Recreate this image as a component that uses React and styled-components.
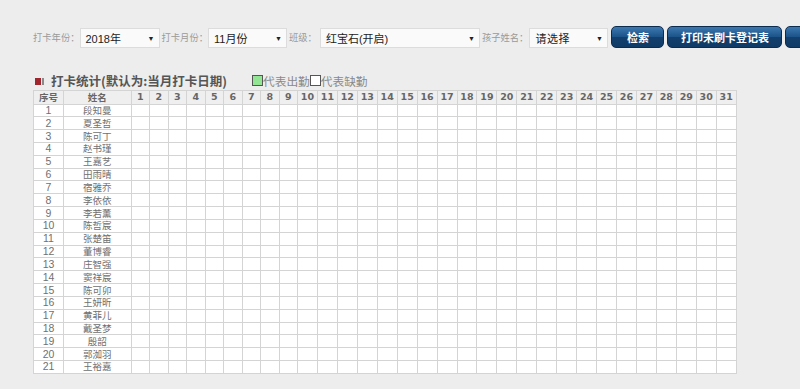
import React from 'react'
import styled, { createGlobalStyle } from 'styled-components'

const GlobalStyle = createGlobalStyle`
  body {
    margin: 0;
    background: #ededed;
    font-family: "Liberation Sans", "Noto Sans CJK SC", sans-serif;
    overflow: hidden;
  }
`

const students = [
  '段知曼', '夏圣哲', '陈可丁', '赵书瑾', '王嘉艺', '田雨晴', '宿雅乔',
  '李依依', '李若薰', '陈哲宸', '张楚笛', '董博睿', '庄智强', '窦祥宸',
  '陈可卯', '王妍昕', '黄菲儿', '戴圣梦', '殷韶', '郭洳羽', '王裕嘉',
]

const days = Array.from({ length: 31 }, (_, i) => i + 1)

export default function App() {
  return (
    <Page>
      <GlobalStyle />
      <Toolbar>
        <FieldLabel first>打卡年份：</FieldLabel>
        <SelectBox width={80}>2018年<Caret>▼</Caret></SelectBox>
        <FieldLabel>打卡月份：</FieldLabel>
        <SelectBox width={79}>11月份<Caret>▼</Caret></SelectBox>
        <FieldLabel extra={3}>班级：</FieldLabel>
        <SelectBox width={160}>红宝石(开启)<Caret>▼</Caret></SelectBox>
        <FieldLabel extra={1}>孩子姓名：</FieldLabel>
        <SelectBox width={79} spaced>请选择<Caret>▼</Caret></SelectBox>
        <Button width={53}>检索</Button>
        <Button width={115}>打印未刷卡登记表</Button>
        <Button width={80}>导出</Button>
      </Toolbar>

      <TitleRow>
        <TitleIcon />
        <Title>打卡统计(默认为:当月打卡日期)</Title>
        <Legend>
          <LegendBox present />
          <LegendText>代表出勤</LegendText>
          <LegendBox />
          <LegendText>代表缺勤</LegendText>
        </Legend>
      </TitleRow>

      <Table>
        <colgroup>
          <col style={{ width: 30 }} />
          <col style={{ width: 67.5 }} />
          {days.map(d => (
            <col key={d} style={{ width: d < 10 ? 18.5 : 19.95 }} />
          ))}
        </colgroup>
        <thead>
          <tr>
            <HeadCell cjk>序号</HeadCell>
            <HeadCell cjk>姓名</HeadCell>
            {days.map(d => <HeadCell key={d}>{d}</HeadCell>)}
          </tr>
        </thead>
        <tbody>
          {students.map((name, i) => (
            <tr key={name}>
              <Cell>{i + 1}</Cell>
              <Cell cjk>{name}</Cell>
              {days.map(d => <Cell key={d} />)}
            </tr>
          ))}
        </tbody>
      </Table>
    </Page>
  )
}

const Page = styled.div`
  padding: 26px 0 0 33px;
  width: 800px;
  box-sizing: border-box;
`

const Toolbar = styled.div`
  display: flex;
  align-items: flex-start;
  height: 22px;
  white-space: nowrap;
`

const FieldLabel = styled.span`
  font-family: "Noto Sans CJK SC", sans-serif;
  font-size: 9.3px;
  line-height: 22px;
  color: #9a9a9a;
  margin-left: ${p => (p.first ? 0 : 2)}px;
  padding-right: ${p => p.extra || 0}px;
`

const SelectBox = styled.div`
  width: ${p => p.width}px;
  height: 20px;
  margin-top: 2px;
  box-sizing: border-box;
  border: 1px solid #dcdcdc;
  background: #fafafa;
  display: flex;
  align-items: center;
  justify-content: space-between;
  padding: 0 4px 0 5px;
  font-size: 11px;
  color: #222;
  letter-spacing: ${p => (p.spaced ? '0.5px' : '0')};
  flex-shrink: 0;
`

const Caret = styled.span`
  font-size: 7px;
  color: #222;
`

const Button = styled.div`
  width: ${p => p.width}px;
  height: 22px;
  box-sizing: border-box;
  flex-shrink: 0;
  margin-left: 3px;
  border: 1px solid #0b2c4f;
  border-radius: 5px;
  background: linear-gradient(#3c78b0, #1d5489 48%, #123f6e 52%, #0f3a66);
  color: #fff;
  font-family: "Noto Sans CJK SC", sans-serif;
  font-size: 11px;
  font-weight: bold;
  display: flex;
  align-items: center;
  justify-content: center;
`

const TitleRow = styled.div`
  display: flex;
  align-items: flex-end;
  height: 16px;
  margin-top: 25px;
`

const TitleIcon = styled.span`
  position: relative;
  width: 6px;
  height: 7px;
  margin: 0 10px 4px 2px;
  background: #a0252c;

  &::after {
    content: "";
    position: absolute;
    left: 7px;
    top: 0;
    width: 2px;
    height: 7px;
    background: #8a8a8a;
  }
`

const Title = styled.h2`
  margin: 0;
  font-family: "Noto Sans CJK SC", sans-serif;
  font-size: 12.5px;
  font-weight: bold;
  color: #555;
  line-height: 16px;
`

const Legend = styled.div`
  display: flex;
  align-items: flex-end;
  margin-left: 25px;
  margin-bottom: 2px;
`

const LegendBox = styled.span`
  width: 11px;
  height: 11px;
  box-sizing: border-box;
  border: 1px solid #555;
  background: ${p => (p.present ? '#92e592' : '#fff')};
  margin-bottom: 1px;
`

const LegendText = styled.span`
  font-family: "Noto Sans CJK SC", sans-serif;
  font-size: 11.7px;
  color: #8a8a8a;
  line-height: 12px;
`

const Table = styled.table`
  margin-top: 0.5px;
  width: 703px;
  table-layout: fixed;
  border-collapse: collapse;
  border: 1px solid #d4d4d4;
  background: #fff;
`

const HeadCell = styled.th`
  height: 13px;
  padding: 0;
  background: #efefef;
  border: 1px solid #d4d4d4;
  color: #666;
  font-family: ${p => (p.cjk ? '"Noto Sans CJK SC", sans-serif' : '"DejaVu Sans", sans-serif')};
  font-size: ${p => (p.cjk ? '9.5px' : '9.5px')};
  font-weight: bold;
  line-height: 12px;
  text-align: center;
`

const Cell = styled.td`
  height: 11.83px;
  padding: 0;
  border: 1px solid #d4d4d4;
  color: #707070;
  font-family: ${p => (p.cjk ? '"Noto Sans CJK SC", sans-serif' : '"Liberation Sans", sans-serif')};
  font-size: ${p => (p.cjk ? '9.5px' : '10.5px')};
  line-height: 11px;
  text-align: center;
`
